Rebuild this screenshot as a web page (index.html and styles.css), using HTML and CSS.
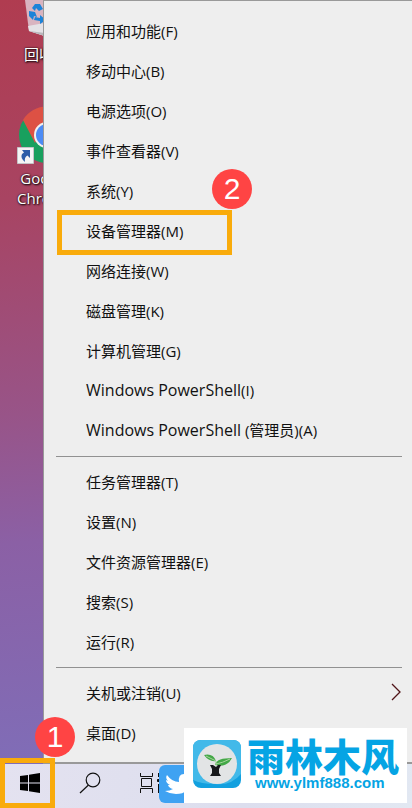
FILE: index.html
```html
<!DOCTYPE html>
<html lang="zh-CN">
<head>
<meta charset="utf-8">
<meta name="viewport" content="width=device-width, initial-scale=1">
<title>Windows 10</title>
<link rel="stylesheet" href="styles.css">
</head>
<body>
<main class="desktop">
  <section class="shortcuts">
    <a class="shortcut bin" href="#">
      <svg width="48" height="36" viewBox="0 0 48 36" aria-hidden="true">
        <path d="M5 0 9 31 25 36 43 31 47 0Z" fill="#d9b4c0"/>
        <path d="M8 26 24 23 43 27 43 31 25 36 9 31Z" fill="#e4e2e6"/>
        <path d="M9 31 25 33V36Z" fill="#b9b6bc"/>
        <path d="M12 8 15 4 20 4 23 9 19 11 16 8 15 11Z" fill="#1c83d8"/>
        <path d="M9 11 15 12 17 17 14 16 13 20 9 16Z" fill="#1c83d8"/>
        <path d="M14 20 15 17 20 18V15L26 20 20 24V21Z" fill="#1c83d8"/>
      </svg>
      <span>回收站</span>
    </a>
    <a class="shortcut chrome" href="#">
      <svg width="60" height="60" viewBox="0 0 60 60" aria-hidden="true">
        <circle cx="30" cy="29" r="28" fill="#18a05e"/>
        <path d="M6 14A28 28 0 0 1 54 14H30L18 37Z" fill="#dd5144"/>
        <path d="M54 14A28 28 0 0 1 30 57L42 36 30 14Z" fill="#ffce44"/>
        <circle cx="30" cy="29" r="13" fill="#f1f1f1"/>
        <circle cx="30" cy="29" r="11" fill="#4c8bf5"/>
        <path d="M.5 41.500H16.500V57.500H.5Z" fill="#f4f4f4" stroke="#c4c4c8"/>
        <path d="M5 44H13V52L10.500 49.500Q7 51 8 56 3 52 5 48L7 46.500Z" fill="#2c5da8"/>
      </svg>
      <span>Google<br>Chrome</span>
    </a>
  </section>
  <nav class="menu">
    <button class="item">应用和功能(F)</button>
    <button class="item">移动中心(B)</button>
    <button class="item">电源选项(O)</button>
    <button class="item">事件查看器(V)</button>
    <button class="item">系统(Y)</button>
    <button class="item marked">设备管理器(M)<span class="badge step-two">2</span></button>
    <button class="item">网络连接(W)</button>
    <button class="item">磁盘管理(K)</button>
    <button class="item">计算机管理(G)</button>
    <button class="item"><span><span class="latin">Windows PowerShell</span>(I)</span></button>
    <button class="item"><span><span class="latin">Windows PowerShell</span> (管理员)(A)</span></button>
    <hr class="rule">
    <button class="item">任务管理器(T)</button>
    <button class="item">设置(N)</button>
    <button class="item">文件资源管理器(E)</button>
    <button class="item">搜索(S)</button>
    <button class="item">运行(R)</button>
    <hr class="rule">
    <button class="item">关机或注销(U)
      <svg width="12" height="20" viewBox="0 0 12 20" aria-hidden="true"><path d="M2 2 10 10 2 18" fill="none" stroke="#501418" stroke-width="1.300"/></svg>
    </button>
    <button class="item">桌面(D)</button>
  </nav>
</main>
<footer class="taskbar">
  <button class="task start" aria-label="开始">
    <svg width="20" height="20" viewBox="0 0 20 20" aria-hidden="true"><path d="M0 3 8 2V9.500H0ZM9 1.800 20 0V9.500H9ZM0 10.500H8V18L0 17ZM9 10.500H20V20L9 18.200Z"/></svg>
    <span class="badge step-one">1</span>
  </button>
  <button class="task" aria-label="搜索">
    <svg width="22" height="22" viewBox="0 0 22 22" fill="none" stroke="#111" stroke-width="1.200" aria-hidden="true"><circle cx="14" cy="8" r="6.800"/><path d="M9.500 13 1 21"/></svg>
  </button>
  <button class="task view" aria-label="任务视图">
    <svg width="24" height="20" viewBox="0 0 24 20" fill="none" stroke="#111" aria-hidden="true"><path d="M.5 0V3.500H12.500V0M1.500 5.500H11.500V13.500H1.500ZM.5 20V15.500H12.500V20M18.500 0V4M18.500 11V20"/><path d="M17.500 6.500H20.500V8.500H17.500Z" fill="#111"/></svg>
  </button>
  <svg class="bird" width="38" height="38" viewBox="0 0 38 38" aria-hidden="true"><rect width="38" height="38" rx="6" fill="#3fa2f2"/><path d="M8 10Q13 17 20 17 19 9 25 9 29 9 30 12L34 11 31 15Q31 29 17 29 11 29 6 26 11 26 14 24 10 23 9 20H11Q7 18 7 15L9 16Q6 13 8 10Z" fill="#fff"/></svg>
</footer>
<aside class="watermark">
  <svg width="48" height="48" viewBox="0 0 48 48" aria-hidden="true">
    <rect width="48" height="48" rx="8" fill="#12a0df"/>
    <path d="M0 40V8Q0 0 8 0H40Q48 0 48 8V34Q38 46 22 44 8 44 0 40Z" fill="#42b9e9"/>
    <circle cx="24" cy="24" r="20" fill="#e2e4e5"/>
    <path d="M11 15Q20 13 23 21 16 22 11 15Z" fill="#43a847"/>
    <path d="M22 25Q23 18 39 18 34 28 22 25Z" fill="#43a847"/>
    <path d="M23 24Q29 23 37 19M13 16 23 21V25" fill="none" stroke="#a5d49b"/>
    <path d="M17 25H20L23 27 25 25H28L26 29V33L28 36H17L19 33V29Z" fill="#17191b"/>
  </svg>
  <div class="brand"><strong>雨林木风</strong><span>www.ylmf888.com</span></div>
</aside>
</body>
</html>
```
FILE: styles.css
```css
*, *::before { box-sizing: border-box; }
body {
  position: relative;
  display: flex;
  flex-direction: column;
  min-height: 100vh;
  margin: 0;
  overflow-x: hidden;
  font-family: "Open Sans", "Noto Sans CJK SC", sans-serif;
  font-size: 15px;
  color: #111;
}
button {
  margin: 0;
  padding: 0;
  border: 0;
  background: none;
  font: inherit;
  color: inherit;
}
.desktop {
  display: flex;
  flex: 1;
  background: linear-gradient(175deg, #b03c50 0%, #a84462 25%, #985488 52%, #8b60a5 68%, #7e6fba 100%);
}
.shortcuts {
  width: 43px;
  flex: none;
  overflow: hidden;
}
.shortcut {
  display: flex;
  flex-direction: column;
  width: 74px;
  margin-left: 17px;
  color: #fff;
  line-height: 20px;
  text-decoration: none;
  text-shadow: 1px 1px 2px #000, 0 0 2px #000;
}
.bin { height: 106px; }
.bin svg { margin-left: 3px; }
.bin span { margin: 8px 0 0 7px; }
.chrome span { margin-top: 2px; text-align: center; width: 56px; }
.menu {
  display: flex;
  flex: 1;
  flex-direction: column;
  padding: 11px 0 8px;
  border: solid #999;
  border-width: 1px 0 2px 1px;
  background: #eee;
}
.item {
  display: flex;
  position: relative;
  align-items: center;
  justify-content: space-between;
  height: 40px;
  padding: 0 10px 4px 42px;
  text-align: left;
}
.latin { font-size: 16px; }
.rule {
  width: auto;
  height: 1px;
  margin: 4px 10px 6px 12px;
  border: 0;
  background: #919191;
}
.marked::before {
  content: "";
  position: absolute;
  left: 13px;
  top: -2px;
  width: 175px;
  height: 45px;
  border: 5px solid #f9ab0b;
}
.badge {
  position: absolute;
  z-index: 2;
  width: 40px;
  height: 40px;
  border-radius: 50%;
  background: #ff4444;
  color: #fff;
  font: 30px/40px "Liberation Sans", sans-serif;
  text-align: center;
}
.step-two { left: 168px; top: -43px; }
.step-one { left: 35px; top: -47px; }
.taskbar {
  display: flex;
  position: relative;
  height: 44px;
  background: linear-gradient(100deg, #e4e2f0, #dcdeee 60%, #e2e8f2);
}
.task {
  display: grid;
  width: 48px;
  padding-bottom: 6px;
  place-items: center;
}
.start {
  position: relative;
  width: 66px;
  padding-right: 6px;
}
.start::before {
  content: "";
  position: absolute;
  left: 0;
  bottom: 0;
  width: 55px;
  height: 50px;
  border: 5px solid #f9ab0b;
}
.view { width: 76px; }
.bird { position: absolute; left: 159px; top: 1px; }
.watermark {
  display: flex;
  position: absolute;
  z-index: 3;
  right: 5px;
  bottom: 5px;
  width: 223px;
  height: 75px;
  padding: 12px 0 0 9px;
  gap: 6px;
  background: #fff;
  color: #05a4e4;
}
.watermark svg { flex: none; }
.brand { display: flex; flex-direction: column; }
.brand strong {
  font: 900 38px/30px "Noto Sans CJK SC", sans-serif;
  white-space: nowrap;
}
.brand span { margin: 4px 0 0 8px; font: bold 15px/18px "Liberation Sans", sans-serif; }
```
